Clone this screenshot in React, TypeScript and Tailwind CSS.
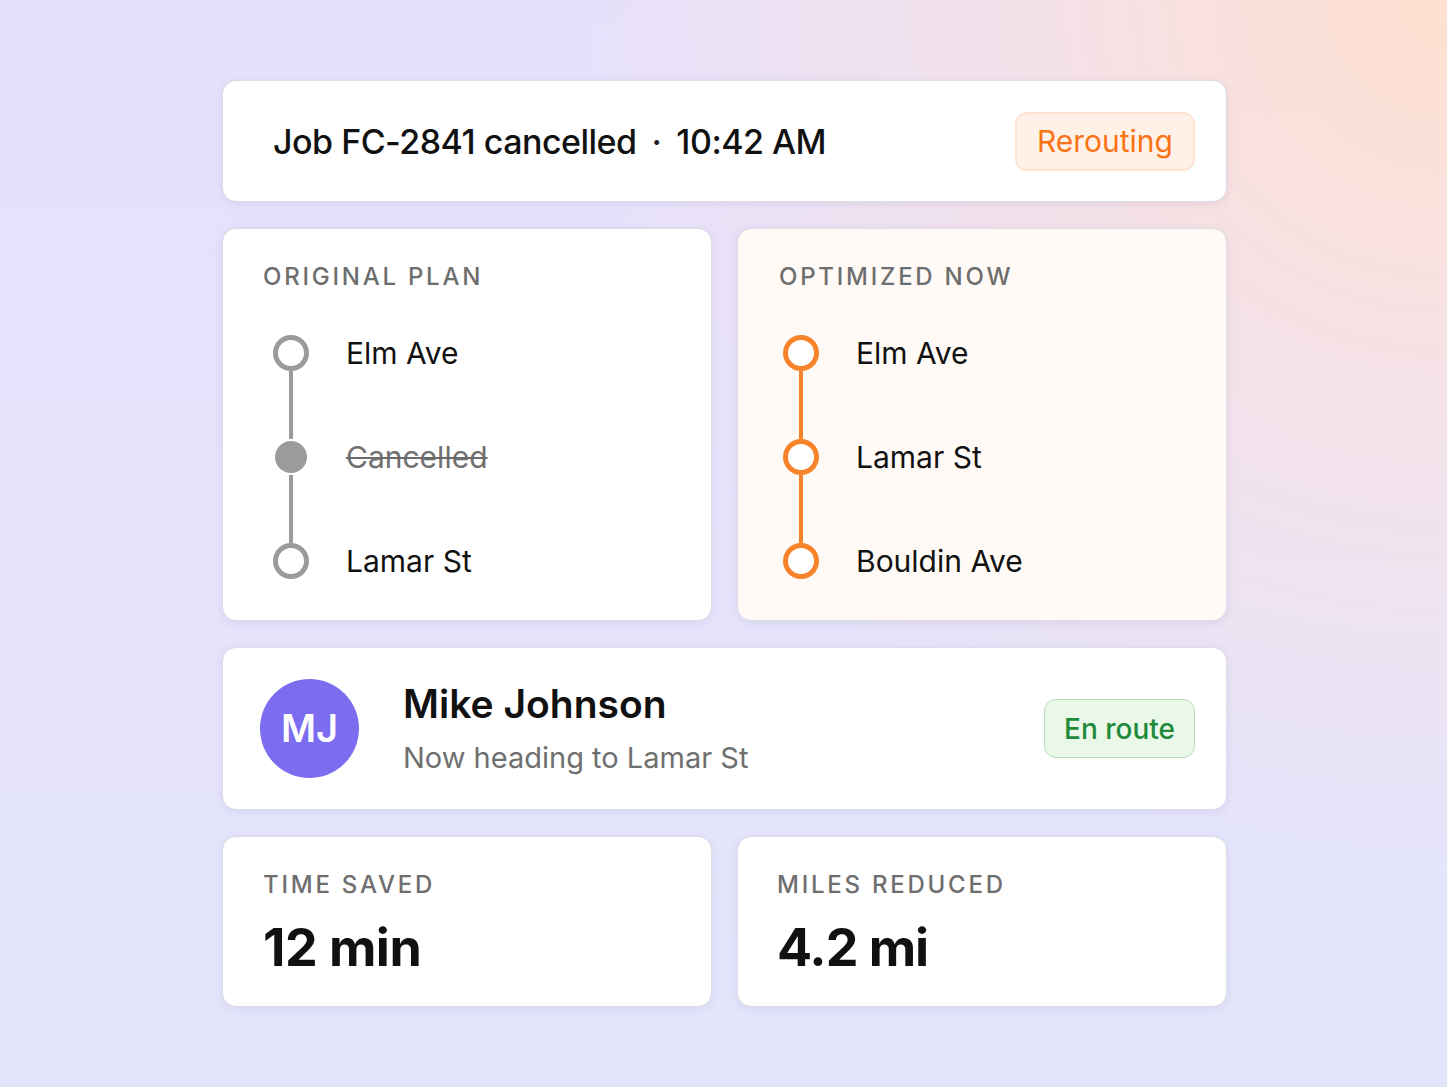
import React from 'react';

type Stop = { name: string; cancelled?: boolean };

const ORIGINAL: Stop[] = [{ name: 'Elm Ave' }, { name: 'Cancelled', cancelled: true }, { name: 'Lamar St' }];
const OPTIMIZED: Stop[] = [{ name: 'Elm Ave' }, { name: 'Lamar St' }, { name: 'Bouldin Ave' }];

const cardBase =
  'rounded-[14px] border border-[#dcdbe6] shadow-[0_2px_8px_rgba(90,80,150,0.10)]';

const Timeline: React.FC<{ stops: Stop[]; tone: 'gray' | 'orange' }> = ({ stops, tone }) => {
  const ring = tone === 'orange' ? 'border-[#f7832b]' : 'border-[#9b9b9b]';
  const line = tone === 'orange' ? 'bg-[#f7832b]' : 'bg-[#9b9b9b]';
  return (
    <div className="flex gap-[37px]">
      {/* markers */}
      <div className="flex flex-col items-center">
        {stops.map((s, i) => (
          <React.Fragment key={i}>
            {s.cancelled ? (
              <div className="w-[32px] h-[32px] my-[2px] rounded-full bg-[#9b9b9b]" />
            ) : (
              <div className={`w-[36px] h-[36px] rounded-full border-[5px] ${ring} bg-white/90`} />
            )}
            {i < stops.length - 1 && <div className={`w-[4px] h-[68px] ${line}`} />}
          </React.Fragment>
        ))}
      </div>
      {/* labels */}
      <div className="flex flex-col gap-[68px]">
        {stops.map((s, i) => (
          <div key={i} className="h-[36px] flex items-center">
            {s.cancelled ? (
              <span className="text-[30px] text-[#707070] line-through decoration-[2px] decoration-[#6a6a6a]">{s.name}</span>
            ) : (
              <span className="text-[30px] text-[#111]">{s.name}</span>
            )}
          </div>
        ))}
      </div>
    </div>
  );
};

const Label: React.FC<{ children: React.ReactNode }> = ({ children }) => (
  <div className="text-[24px] leading-none tracking-[0.115em] font-medium text-[#6e6e6e] uppercase">{children}</div>
);

export default function App() {
  return (
    <div
      className="min-h-screen w-full pt-[80px] pb-[80px] bg-[radial-gradient(circle_at_100%_0%,rgba(255,224,208,1)_0%,rgba(252,226,222,0.6)_24%,rgba(236,228,248,0)_48%),linear-gradient(180deg,#e6e0fb_0%,#e6e3fb_50%,#e3e5fb_100%)]"
      style={{ fontFamily: 'Inter, "Noto Sans", sans-serif' }}
    >
      <div className="w-[1005px] ml-[222px] flex flex-col gap-[26px]">
        {/* header */}
        <div className={`${cardBase} bg-white h-[122px] flex items-center justify-between pl-[50px] pr-[31px]`}>
          <div className="text-[34px] font-medium text-[#111] tracking-[-0.015em] flex items-center">
            <span>Job FC-2841 cancelled</span>
            <span className="mx-[15px] text-[#222]">·</span>
            <span>10:42 AM</span>
          </div>
          <div className="h-[59px] px-[20px] flex items-center rounded-[12px] bg-[#fff1e7] border-2 border-[#fde3d2] text-[30px] text-[#f97316]">
            Rerouting
          </div>
        </div>

        {/* plans */}
        <div className="grid grid-cols-[490px_490px] gap-[25px]">
          <div className={`${cardBase} bg-white h-[393px] pt-[36px] pl-[40px]`}>
            <Label>Original Plan</Label>
            <div className="mt-[46px] pl-[10px]">
              <Timeline stops={ORIGINAL} tone="gray" />
            </div>
          </div>
          <div className={`${cardBase} bg-[#fffaf6] h-[393px] pt-[36px] pl-[41px]`}>
            <Label>Optimized Now</Label>
            <div className="mt-[46px] pl-[4px]">
              <Timeline stops={OPTIMIZED} tone="orange" />
            </div>
          </div>
        </div>

        {/* driver */}
        <div className={`${cardBase} bg-white h-[163px] flex items-center pl-[37px] pr-[31px]`}>
          <div className="w-[99px] h-[99px] rounded-full bg-[#7b6cf0] flex items-center justify-center text-white text-[38px] font-semibold">
            MJ
          </div>
          <div className="ml-[44px] flex-1">
            <div className="text-[39px] font-semibold text-[#111] leading-tight mt-[2px]">Mike Johnson</div>
            <div className="text-[29px] text-[#6f6f6f] mt-[7px]">Now heading to Lamar St</div>
          </div>
          <div className="h-[59px] px-[19px] flex items-center rounded-[12px] bg-[#e9f8e8] border border-[#b6dfb8] text-[28px] font-medium text-[#1e8a3a]">
            En route
          </div>
        </div>

        {/* stats */}
        <div className="grid grid-cols-[490px_490px] gap-[25px]">
          <div className={`${cardBase} bg-white h-[171px] pt-[36px] pl-[40px]`}>
            <Label>Time Saved</Label>
            <div className="mt-[25px] text-[52px] font-bold text-[#111] leading-none tracking-[-0.01em]">12 min</div>
          </div>
          <div className={`${cardBase} bg-white h-[171px] pt-[36px] pl-[39px]`}>
            <Label>Miles Reduced</Label>
            <div className="mt-[25px] text-[52px] font-bold text-[#111] leading-none tracking-[-0.02em]">4.2 mi</div>
          </div>
        </div>
      </div>
    </div>
  );
}
